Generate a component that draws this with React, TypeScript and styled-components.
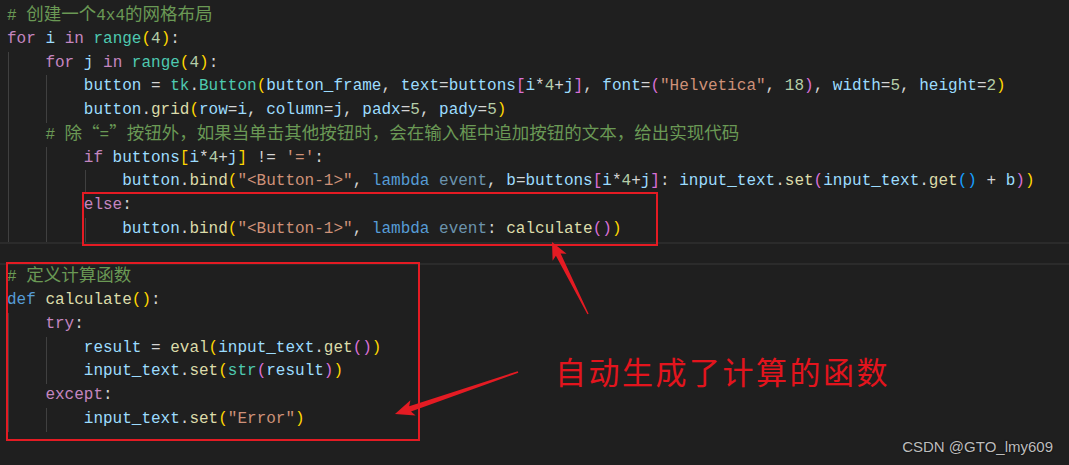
import React from "react";
import styled, { createGlobalStyle } from "styled-components";

const GlobalStyle = createGlobalStyle`
  html, body { margin: 0; padding: 0; background: #1f1f1f; }
  body { overflow: hidden; }
`;

type Kind =
  | "kw" | "st" | "fn" | "cls" | "var" | "str" | "num"
  | "op" | "cm" | "b1" | "b2" | "b3" | "dim";

const palette: Record<Kind, string> = {
  kw: "#c586c0",
  st: "#569cd6",
  fn: "#dcdcaa",
  cls: "#4ec9b0",
  var: "#9cdcfe",
  str: "#ce9178",
  num: "#b5cea8",
  op: "#d4d4d4",
  cm: "#6a9955",
  b1: "#ffd700",
  b2: "#da70d6",
  b3: "#179fff",
  dim: "#6b93ad",
};

type Tok = [Kind, string];
interface CodeLine {
  indent: number;
  toks: Tok[];
  current?: boolean;
}

const LINE_H = 23.75;
const COL = 9.6;

const lines: CodeLine[] = [
  { indent: 0, toks: [["cm", "# 创建一个4x4的网格布局"]] },
  {
    indent: 0,
    toks: [["kw", "for"], ["op", " "], ["var", "i"], ["op", " "], ["kw", "in"], ["op", " "], ["cls", "range"], ["b1", "("], ["num", "4"], ["b1", ")"], ["op", ":"]],
  },
  {
    indent: 1,
    toks: [["kw", "for"], ["op", " "], ["var", "j"], ["op", " "], ["kw", "in"], ["op", " "], ["cls", "range"], ["b1", "("], ["num", "4"], ["b1", ")"], ["op", ":"]],
  },
  {
    indent: 2,
    toks: [
      ["var", "button"], ["op", " = "], ["cls", "tk"], ["op", "."], ["cls", "Button"], ["b1", "("],
      ["var", "button_frame"], ["op", ", "], ["var", "text"], ["op", "="], ["var", "buttons"],
      ["b2", "["], ["var", "i"], ["op", "*"], ["num", "4"], ["op", "+"], ["var", "j"], ["b2", "]"],
      ["op", ", "], ["var", "font"], ["op", "="], ["b2", "("], ["str", "\"Helvetica\""], ["op", ", "],
      ["num", "18"], ["b2", ")"], ["op", ", "], ["var", "width"], ["op", "="], ["num", "5"], ["op", ", "],
      ["var", "height"], ["op", "="], ["num", "2"], ["b1", ")"],
    ],
  },
  {
    indent: 2,
    toks: [
      ["var", "button"], ["op", "."], ["fn", "grid"], ["b1", "("], ["var", "row"], ["op", "="], ["var", "i"],
      ["op", ", "], ["var", "column"], ["op", "="], ["var", "j"], ["op", ", "], ["var", "padx"], ["op", "="],
      ["num", "5"], ["op", ", "], ["var", "pady"], ["op", "="], ["num", "5"], ["b1", ")"],
    ],
  },
  { indent: 1, toks: [["cm", "# 除“=”按钮外，如果当单击其他按钮时，会在输入框中追加按钮的文本，给出实现代码"]] },
  {
    indent: 2,
    toks: [
      ["kw", "if"], ["op", " "], ["var", "buttons"], ["b1", "["], ["var", "i"], ["op", "*"], ["num", "4"],
      ["op", "+"], ["var", "j"], ["b1", "]"], ["op", " != "], ["str", "'='"], ["op", ":"],
    ],
  },
  {
    indent: 3,
    toks: [
      ["var", "button"], ["op", "."], ["fn", "bind"], ["b1", "("], ["str", "\"<Button-1>\""], ["op", ", "],
      ["st", "lambda"], ["op", " "], ["dim", "event"], ["op", ", "], ["var", "b"], ["op", "="], ["var", "buttons"],
      ["b2", "["], ["var", "i"], ["op", "*"], ["num", "4"], ["op", "+"], ["var", "j"], ["b2", "]"], ["op", ": "],
      ["var", "input_text"], ["op", "."], ["fn", "set"], ["b2", "("], ["var", "input_text"], ["op", "."],
      ["fn", "get"], ["b3", "()"], ["op", " + "], ["var", "b"], ["b2", ")"], ["b1", ")"],
    ],
  },
  { indent: 2, toks: [["kw", "else"], ["op", ":"]] },
  {
    indent: 3,
    toks: [
      ["var", "button"], ["op", "."], ["fn", "bind"], ["b1", "("], ["str", "\"<Button-1>\""], ["op", ", "],
      ["st", "lambda"], ["op", " "], ["dim", "event"], ["op", ": "], ["fn", "calculate"], ["b2", "()"], ["b1", ")"],
    ],
  },
  { indent: 0, toks: [], current: true },
  { indent: 0, toks: [["cm", "# 定义计算函数"]] },
  { indent: 0, toks: [["st", "def"], ["op", " "], ["fn", "calculate"], ["b1", "()"], ["op", ":"]] },
  { indent: 1, toks: [["kw", "try"], ["op", ":"]] },
  {
    indent: 2,
    toks: [
      ["var", "result"], ["op", " = "], ["fn", "eval"], ["b1", "("], ["var", "input_text"], ["op", "."],
      ["fn", "get"], ["b2", "()"], ["b1", ")"],
    ],
  },
  {
    indent: 2,
    toks: [
      ["var", "input_text"], ["op", "."], ["fn", "set"], ["b1", "("], ["cls", "str"], ["b2", "("],
      ["var", "result"], ["b2", ")"], ["b1", ")"],
    ],
  },
  { indent: 1, toks: [["kw", "except"], ["op", ":"]] },
  {
    indent: 2,
    toks: [["var", "input_text"], ["op", "."], ["fn", "set"], ["b1", "("], ["str", "\"Error\""], ["b1", ")"]],
  },
];

const Screen = styled.div`
  position: relative;
  width: 1069px;
  height: 465px;
  overflow: hidden;
  background: #1f1f1f;
`;

const Editor = styled.div`
  display: flex;
  flex-direction: column;
  padding-top: 4.2px;
  font-family: "Liberation Mono", "DejaVu Sans Mono", monospace;
  font-size: 16px;
`;

const Line = styled.div<{ $current?: boolean }>`
  display: flex;
  height: ${LINE_H}px;
  padding-left: 7px;
  box-shadow: ${(p) =>
    p.$current ? "inset 0 2px 0 #2b2b2b, inset 0 -2px 0 #2b2b2b" : "none"};
`;

const Guide = styled.span`
  flex: 0 0 ${COL * 4}px;
  height: 100%;
  background: linear-gradient(
    to right,
    transparent 1px,
    #404040 1px,
    #404040 2px,
    transparent 2px
  );
`;

const Text = styled.span`
  display: block;
  white-space: pre;
  line-height: ${LINE_H}px;
`;

const Token = styled.span<{ $k: Kind }>`
  color: ${(p) => palette[p.$k]};
`;

const Han = styled.span`
  font-family: "Noto Sans CJK SC", sans-serif;
  font-size: 17.5px;
  line-height: 1;
`;

const Overlay = styled.svg`
  position: absolute;
  left: 0;
  top: 0;
  pointer-events: none;
`;

const Note = styled.div`
  position: absolute;
  left: 555px;
  top: 355px;
  font-family: "Noto Sans CJK SC", sans-serif;
  font-size: 31px;
  line-height: 31px;
  letter-spacing: 2.5px;
  color: #e3141d;
  white-space: nowrap;
`;

const Watermark = styled.div`
  position: absolute;
  right: 16px;
  bottom: 11px;
  font-family: "Liberation Sans", Arial, sans-serif;
  font-size: 15px;
  line-height: 15px;
  color: #bdbdbd;
  text-shadow: 0 0 2px rgba(0, 0, 0, 0.8);
  white-space: nowrap;
`;

const HAN_RE = /([\u3000-\u9fff\uff00-\uffef\u201c\u201d]+)/;

function renderText(text: string) {
  return text.split(HAN_RE).map((part, i) =>
    i % 2 === 1 ? <Han key={i}>{part}</Han> : part
  );
}

type Pt = [number, number];

function arrowPoints(
  tip: Pt,
  tail: Pt,
  headLen: number,
  headHalf: number,
  neckHalf: number,
  tailHalf: number
): string {
  const dx = tip[0] - tail[0];
  const dy = tip[1] - tail[1];
  const len = Math.hypot(dx, dy);
  const ux = dx / len;
  const uy = dy / len;
  const nx = -uy;
  const ny = ux;
  const neck: Pt = [tip[0] - ux * headLen, tip[1] - uy * headLen];
  const back: Pt = [tip[0] - ux * (headLen - 3), tip[1] - uy * (headLen - 3)];
  const pts: Pt[] = [
    tip,
    [neck[0] + nx * headHalf, neck[1] + ny * headHalf],
    [back[0] + nx * neckHalf, back[1] + ny * neckHalf],
    [tail[0] + nx * tailHalf, tail[1] + ny * tailHalf],
    [tail[0] - nx * tailHalf, tail[1] - ny * tailHalf],
    [back[0] - nx * neckHalf, back[1] - ny * neckHalf],
    [neck[0] - nx * headHalf, neck[1] - ny * headHalf],
  ];
  return pts.map((p) => `${p[0].toFixed(1)},${p[1].toFixed(1)}`).join(" ");
}

const RED = "#e41b23";

export default function App() {
  return (
    <>
      <GlobalStyle />
      <Screen>
        <Editor>
          {lines.map((ln, i) => (
            <Line key={i} $current={ln.current}>
              {Array.from({ length: ln.indent }).map((_, g) => (
                <Guide key={g} />
              ))}
              <Text>
                {ln.toks.map(([k, s], j) => (
                  <Token key={j} $k={k}>
                    {k === "cm" ? renderText(s) : s}
                  </Token>
                ))}
              </Text>
            </Line>
          ))}
        </Editor>

        <Overlay width={1069} height={465} viewBox="0 0 1069 465">
          <rect x={83} y={193} width={574} height={52} fill="none" stroke={RED} strokeWidth={2} />
          <rect x={7} y={263} width={412} height={177} fill="none" stroke={RED} strokeWidth={2} />
          <polygon
            points={arrowPoints([552, 242], [588, 314], 17, 7.8, 2.6, 0.7)}
            fill={RED}
          />
          <polygon
            points={arrowPoints([395, 414], [518, 372], 19, 8, 2.8, 0.8)}
            fill={RED}
          />
        </Overlay>

        <Note>自动生成了计算的函数</Note>
        <Watermark>CSDN @GTO_lmy609</Watermark>
      </Screen>
    </>
  );
}
